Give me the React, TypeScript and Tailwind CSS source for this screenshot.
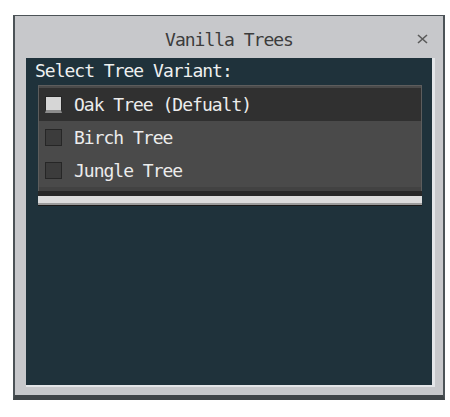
import { useState } from 'react';

const variants = ['Oak Tree (Defualt)', 'Birch Tree', 'Jungle Tree'];

export default function App() {
  const [selected, setSelected] = useState(0);

  return (
    <div className="w-[450px] h-[417px] bg-white pt-[15px] pl-[13px] font-['DejaVu_Sans_Mono',monospace] text-[18px] leading-[20px] tracking-[-1px]">
      {/* Window */}
      <div className="w-[432px] h-[385px] flex flex-col bg-[#c7c8cb] border-t border-l-2 border-r-2 border-b-[5px] border-t-[#4c5357] border-l-[#4c5357] border-r-[#4c5357] border-b-[#3f4548]">
        {/* Title bar */}
        <div className="relative h-[42px] shrink-0 pt-[14px] text-center text-[#3c3c3c]">
          Vanilla Trees
          <button className="absolute right-[15px] top-[18px] w-[11px] h-[10px]">
            <svg width="11" height="10" viewBox="0 0 11 10">
              <path d="M1 1 L10 9 M10 1 L1 9" stroke="#5a5a5a" strokeWidth="1.6" />
            </svg>
          </button>
        </div>

        {/* Content */}
        <div className="ml-[11px] mr-[8px] mb-[8px] flex-1 bg-[#1f323b] border-r-[3px] border-b-2 border-r-[#e3e5e8] border-b-[#e3e5e8] pt-[3px]">
          <div className="pl-[9px] text-[#eef0f0]">Select Tree Variant:</div>

          <div className="ml-[12px] mr-[10px] mt-[4px]">
            <div className="bg-[#4a4a4a] border-t border-l border-r border-[#5d5d5d] pt-[2px]">
              {variants.map((name, i) => (
                <div
                  key={name}
                  onClick={() => setSelected(i)}
                  className={`h-[33px] flex items-center pl-[6px] gap-[12px] text-[#ececec] ${
                    selected === i ? 'bg-[#303030]' : ''
                  }`}
                >
                  {selected === i ? (
                    <div className="w-[17px] h-[17px] border border-[#262626] bg-[#d6d6d6] border-b-[3px] border-b-[#8c8c8c]" />
                  ) : (
                    <div className="w-[17px] h-[17px] border border-[#262626] bg-[#3c3c3c]" />
                  )}
                  <span>{name}</span>
                </div>
              ))}
              <div className="h-[4px] bg-[#424242]" />
            </div>
            <div className="h-[5px] bg-[#282828]" />
            <div className="h-[9px] bg-[#dcdcdc] border-b-2 border-b-[#9b9b9b]" />
            <div className="h-[1px] bg-[#1a1a1a]" />
          </div>
        </div>
      </div>
    </div>
  );
}
